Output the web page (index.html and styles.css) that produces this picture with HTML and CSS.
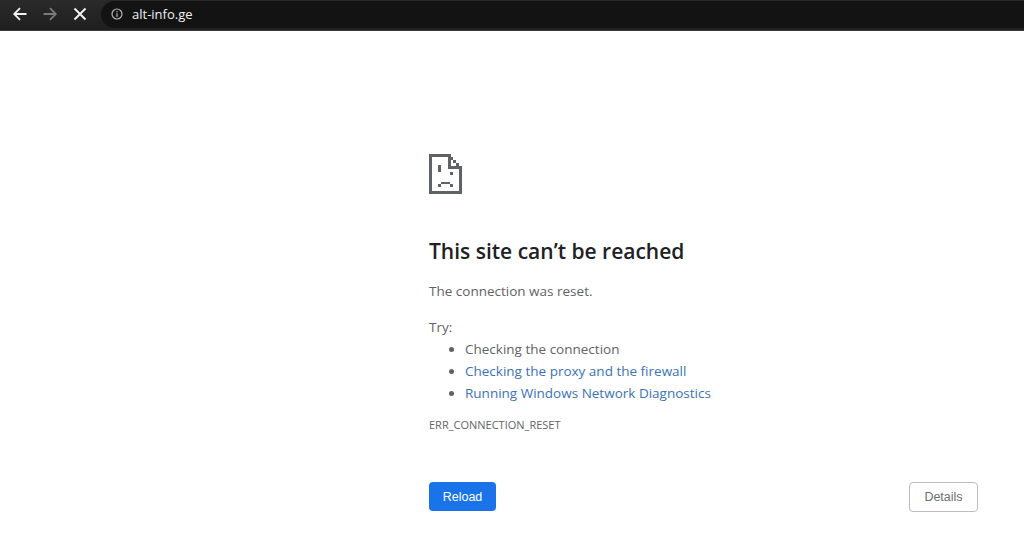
FILE: index.html
```html
<!DOCTYPE html>
<html lang="en">
<head>
<meta charset="utf-8">
<title>alt-info.ge</title>
<link rel="stylesheet" href="styles.css">
</head>
<body>
<header class="toolbar">
  <svg class="nav nav-back" width="16" height="16" viewBox="0 0 16 16"><path d="M14.5 8H2.5M8 2.2L2.2 8 8 13.8" fill="none" stroke="#f1f1f1" stroke-width="1.8"/></svg>
  <svg class="nav nav-forward" width="16" height="16" viewBox="0 0 16 16"><path d="M1.5 8H13.5M8 2.2L13.8 8 8 13.8" fill="none" stroke="#7a7a7a" stroke-width="1.8"/></svg>
  <svg class="nav nav-stop" width="14" height="14" viewBox="0 0 14 14"><path d="M1.5 1.5L12.5 12.5M12.5 1.5L1.5 12.5" fill="none" stroke="#f4f4f4" stroke-width="1.9"/></svg>
  <div class="omnibox">
    <svg class="info" width="12" height="12" viewBox="0 0 12 12"><circle cx="6" cy="6" r="5" fill="none" stroke="#b5b5b5" stroke-width="1.2"/><path d="M6 5.2V9M6 3V4.2" stroke="#b5b5b5" stroke-width="1.2"/></svg>
    <span class="url">alt-info.ge</span>
  </div>
</header>
<main class="page">
  <svg class="sad" width="33" height="40" viewBox="0 0 33 40" shape-rendering="crispEdges">
    <path d="M1.5 1.5H20.5V13.5H31.5V38.5H1.5Z" fill="none" stroke="#5f6368" stroke-width="3"/>
    <path d="M21 3h3v3h-3zM24 6h3v3h-3zM27 9h3v3h-3z" fill="#5f6368"/>
    <path d="M9 11h3v7H9zM21 18h3v3h-3zM12 28h9v2h-9zM9 30h3v3H9zM21 30h3v3h-3z" fill="#5f6368"/>
  </svg>
  <h1 class="title">This site can’t be reached</h1>
  <p class="reason">The connection was reset.</p>
  <p class="try">Try:</p>
  <ul class="tips">
    <li>Checking the connection</li>
    <li class="link">Checking the proxy and the firewall</li>
    <li class="link">Running Windows Network Diagnostics</li>
  </ul>
  <p class="code">ERR_CONNECTION_RESET</p>
  <div class="actions">
    <button class="btn btn-reload">Reload</button>
    <button class="btn btn-details">Details</button>
  </div>
</main>
</body>
</html>
```
FILE: styles.css
```css
* { box-sizing: border-box; }
html, body { margin: 0; height: 100%; background: #fff; overflow: hidden; }
body { font-family: "Open Sans", "Noto Sans", sans-serif; color: #5f6368; }
.toolbar { height: 31px; display: flex; align-items: center; padding: 0 0 2px 12px; background: linear-gradient(#2a2a2a, #1f1f1f); border-bottom: 1px solid #3a3a3a; }
.nav { flex: none; }
.nav-forward { margin-left: 14px; }
.nav-stop { margin-left: 15px; }
.omnibox { flex: 1; margin-left: 14px; height: 27px; display: flex; align-items: center; padding-left: 10px; background: #131313; border-radius: 14px 0 0 14px; }
.info { flex: none; }
.url { margin-left: 9px; color: #f0f0f0; font-size: 13px; }
.page { padding: 123px 46px 0 429px; }
.sad { display: block; }
.title { margin: 41px 0 0; color: #202124; font-size: 21px; line-height: 32px; font-weight: 600; }
.reason { margin: 13px 0 0; font-size: 13.5px; line-height: 22px; }
.try { margin: 14px 0 0; font-size: 13.5px; line-height: 22px; }
.tips { margin: 0; padding: 0 0 0 36px; font-size: 13.5px; line-height: 22px; }
.link { color: #3d72b8; }
.tips li::marker { color: #5f6368; }
.code { margin: 13px 0 0; font-size: 11px; line-height: 16px; }
.actions { margin-top: 49px; display: flex; justify-content: space-between; align-items: flex-start; }
.btn { font-family: "Liberation Sans", sans-serif; font-size: 12.5px; border-radius: 4px; padding: 0; }
.btn-reload { width: 67px; height: 29px; background: #1a73e8; color: #fff; border: 0; }
.btn-details { width: 69px; height: 30px; background: #fff; color: #6b6f73; border: 1px solid #bdbdbd; }
```
